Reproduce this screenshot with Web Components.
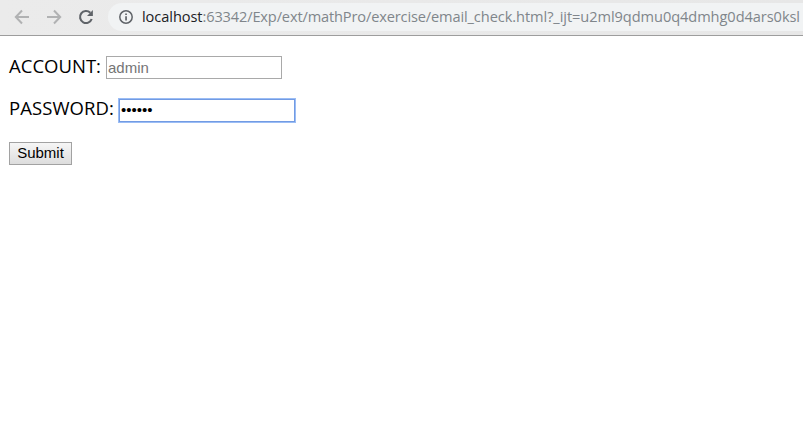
<!DOCTYPE html>
<html lang="en"><head><meta charset="utf-8"><title>email_check</title>
<style>
html,body{margin:0;height:100%;overflow:hidden;background:#fff}
body{font-family:"Open Sans","Noto Sans",sans-serif;color:#000}
</style></head><body>
<app-window></app-window>
<script>
// Text run whose tracking is adjusted to occupy a given width.
class FitText extends HTMLElement{
  connectedCallback(){
    this.attachShadow({mode:'open'}).innerHTML='<style>:host{display:block;white-space:pre;flex:none}span{display:inline-block}</style><span><slot></slot></span>';
    const s=this.shadowRoot.querySelector('span'),w=+this.getAttribute('width');
    s.style.letterSpacing=((w-s.getBoundingClientRect().width)/this.textContent.length)+'px';
    this.style.width=w+'px';
  }
}
class BrowserBar extends HTMLElement{
  connectedCallback(){
    this.attachShadow({mode:'open'}).innerHTML=`<style>
:host{display:flex;box-sizing:border-box;height:36px;flex:none;background:linear-gradient(90deg,#ebebeb,#e7e7e7);border-bottom:1px solid #9d9d9d;padding:3px 0 4px 14px}
nav{display:flex;gap:16px;align-items:center;width:94px;flex:none}
svg{display:block;width:16px;height:16px;flex:none}
.omni{display:flex;align-items:center;height:28px;flex:1;background:#f1f3f4;border-radius:14px 0 0 14px;padding-left:10px;overflow:hidden}
.url{display:flex;margin-left:8px;padding-bottom:2px;font:14.6px/22px "Open Sans","Noto Sans",sans-serif;color:#80868b}
.host{color:#202124}
</style>
<nav>
<svg viewBox="0 0 16 16" fill="none" stroke="#b1b2b3" stroke-width="2"><path d="M15 8H2.5M8 1.5 1.8 8 8 14.5"/></svg>
<svg viewBox="0 0 16 16" fill="none" stroke="#b1b2b3" stroke-width="2"><path d="M1 8h12.5M8 1.5 14.2 8 8 14.5"/></svg>
<svg viewBox="0 0 16 16"><path d="M13.7 10A6 6 0 1 1 12.3 3.8" fill="none" stroke="#5f6368" stroke-width="2.1"/><path d="M14.9 1v6H9z" fill="#5f6368"/></svg>
</nav>
<div class="omni"><svg viewBox="0 0 16 16"><circle cx="8" cy="8" r="6.2" fill="none" stroke="#5f6368" stroke-width="1.5"/><path d="M7.2 4.4h1.7v1.7H7.2zM7.2 7.2h1.7v4.4H7.2z" fill="#5f6368"/></svg>
<div class="url"><fit-text class="host" width="60.5">localhost</fit-text><fit-text width="265">:63342/Exp/ext/mathPro/exercise/email</fit-text><fit-text width="332.5">_check.html?_ijt=u2ml9qdmu0q4dmhg0d4ars0ksl</fit-text></div></div>`;
  }
}
class FormField extends HTMLElement{
  connectedCallback(){
    const a=n=>this.getAttribute(n)||'';
    this.attachShadow({mode:'open'}).innerHTML=`<style>
:host{display:flex;align-items:center;height:23px}
.label{font-size:18.5px;line-height:23px;padding-bottom:5px}
:host([type=password]) .label{padding-bottom:7px}
input{box-sizing:border-box;width:176px;height:23px;margin:0 0 0 5px;padding:1px;border:1px solid #a9a9a9;border-radius:0;background:#fff;font:15px "Liberation Sans",sans-serif;color:#000;outline:none}
input::placeholder{color:#757575;opacity:1}
input[type=password]{border-color:#729be3;box-shadow:0 0 0 1px #9bbdf5;padding-bottom:3px}
</style><fit-text class="label" width="${a('label-width')}">${a('label')}</fit-text><input type="${a('type')}" placeholder="${a('placeholder')}" value="${a('value')}">`;
  }
}
class SubmitButton extends HTMLElement{
  connectedCallback(){
    this.attachShadow({mode:'open'}).innerHTML=`<style>
:host{display:block}
button{box-sizing:border-box;display:block;width:63px;height:23px;margin:0;padding:0 0 2px;border:1px solid #a2a2a2;border-radius:0;background:linear-gradient(#f6f6f6,#dddddd);font:15px/19px "Liberation Sans",sans-serif;color:#000}
</style><button><slot></slot></button>`;
  }
}
class AppWindow extends HTMLElement{
  connectedCallback(){
    this.attachShadow({mode:'open'}).innerHTML=`<style>
:host{display:flex;flex-direction:column;height:100vh;overflow:hidden}
main{display:flex;flex-direction:column;gap:20px;align-items:flex-start;padding:20px 9px}
</style><browser-bar></browser-bar><main>
<form-field label="ACCOUNT:" label-width="92" type="text" placeholder="admin"></form-field>
<form-field label="PASSWORD:" label-width="105" type="password" value="secret"></form-field>
<submit-button>Submit</submit-button></main>`;
  }
}
customElements.define('fit-text',FitText);
customElements.define('browser-bar',BrowserBar);
customElements.define('form-field',FormField);
customElements.define('submit-button',SubmitButton);
customElements.define('app-window',AppWindow);
</script></body></html>
